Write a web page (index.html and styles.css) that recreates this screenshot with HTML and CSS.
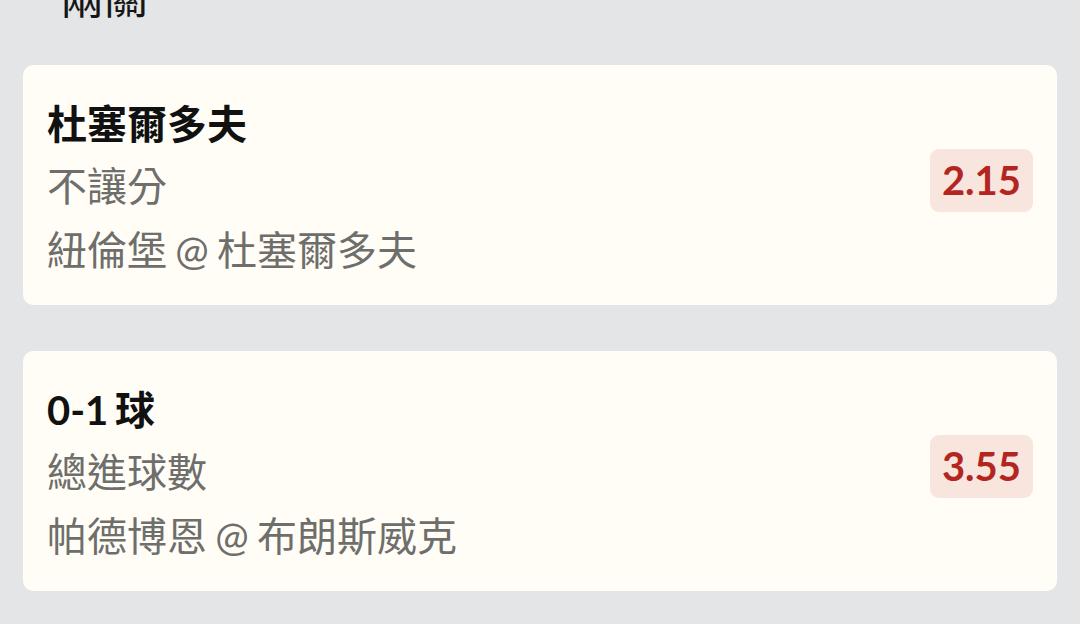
FILE: index.html
```html
<!DOCTYPE html>
<html lang="zh-Hant">
<head>
<meta charset="utf-8">
<link rel="stylesheet" href="styles.css">
</head>
<body>
<div class="page">
  <div class="header">兩關</div>
  <div class="card">
    <div class="info">
      <div class="title">杜塞爾多夫</div>
      <div class="line">不讓分</div>
      <div class="line">紐倫堡 @ 杜塞爾多夫</div>
    </div>
    <div class="odds">2.15</div>
  </div>
  <div class="card second">
    <div class="info">
      <div class="title">0-1 球</div>
      <div class="line">總進球數</div>
      <div class="line">帕德博恩 @ 布朗斯威克</div>
    </div>
    <div class="odds">3.55</div>
  </div>
</div>
</body>
</html>
```
FILE: styles.css
```css
html, body {
  margin: 0;
  padding: 0;
  background: #e4e5e7;
  overflow: hidden;
}
.page {
  padding: 0 23px;
  font-family: Lato, "Noto Sans CJK TC", sans-serif;
}
.header {
  margin-top: -27px;
  height: 48px;
  line-height: 48px;
  padding-left: 37px;
  font-size: 44px;
  font-weight: 400;
  color: #161616;
}
.card {
  margin-top: 44px;
  height: 240px;
  box-sizing: border-box;
  padding: 29px 24px 23px 24px;
  background: #fffdf5;
  border-radius: 10px;
  display: flex;
  align-items: center;
  justify-content: space-between;
}
.card.second {
  margin-top: 46px;
}
.info {
  display: flex;
  flex-direction: column;
}
.title {
  font-size: 40px;
  line-height: 60px;
  font-weight: 700;
  color: #111111;
  word-spacing: -3px;
}
.line {
  font-size: 40px;
  line-height: 64px;
  color: #6e6e6c;
  word-spacing: -2px;
}
.odds {
  margin-bottom: 15px;
  padding: 8px 12px;
  line-height: 47px;
  font-size: 40px;
  font-weight: 700;
  color: #b3261f;
  background: #f8e5de;
  border-radius: 9px;
}
```
